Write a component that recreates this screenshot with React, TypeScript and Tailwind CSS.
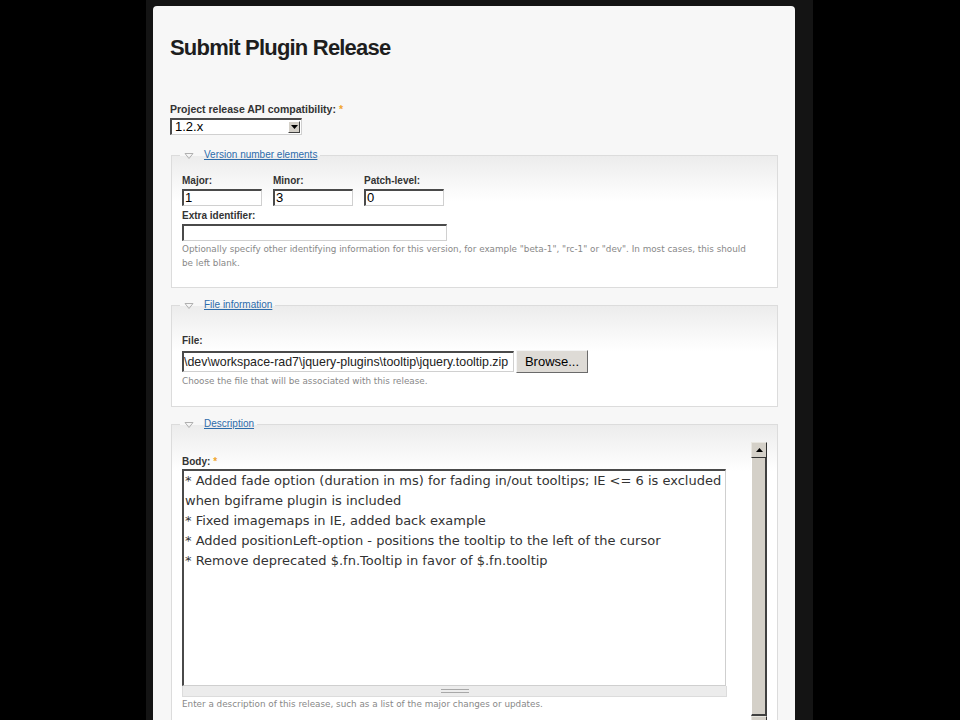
import { ReactNode } from "react";

// Label above a form field
const Label = ({
  text,
  required,
  big,
}: {
  text: string;
  required?: boolean;
  big?: boolean;
}) => {
  return (
    <div
      className={`${
        big ? "text-[10.5px]" : "text-[10px]"
      } leading-[14px] font-bold text-[#333]`}
    >
      {text}
      {required && <span className="ml-[3px] text-[#f0a52c]">*</span>}
    </div>
  );
};

const TextInput = ({ value, width }: { value: string; width: string }) => {
  return (
    <div
      className={`${width} mt-[1px] h-[17px] overflow-hidden whitespace-nowrap border-t-2 border-l-2 border-r border-b border-t-[#4a4a4a] border-l-[#4a4a4a] border-r-[#d0d0d0] border-b-[#d0d0d0] bg-white pl-[1px] text-[13px] leading-[14px] text-black`}
    >
      {value}
    </div>
  );
};

const Help = ({ children }: { children: ReactNode }) => {
  return (
    <p className="whitespace-nowrap font-['DejaVu_Sans',Verdana,sans-serif] text-[8.8px] leading-[14px] text-[#888]">
      {children}
    </p>
  );
};

const Fieldset = ({
  title,
  className,
  children,
}: {
  title: string;
  className: string;
  children: ReactNode;
}) => {
  return (
    <fieldset
      className={`ml-[1px] border border-[#dcdcdc] bg-[linear-gradient(to_bottom,#ececec,#ffffff_46px)] px-[10px] ${className}`}
    >
      <legend className="ml-[-2px] px-[3px]">
        <span className="flex items-center text-[10px] leading-[14px]">
          <svg width="10" height="7" viewBox="0 0 10 7" className="ml-[1px]">
            <path d="M1 1.5h8L5 6.5z" fill="none" stroke="#b0b0b0" />
          </svg>
          <a href="#" className="ml-[10px] text-[#2d6cab] underline">
            {title}
          </a>
        </span>
      </legend>
      {children}
    </fieldset>
  );
};

const Select = () => {
  return (
    <div className="mt-[2px] flex h-[17px] w-[132px] items-center border-t-2 border-l-2 border-r border-b border-t-[#4a4a4a] border-l-[#4a4a4a] border-r-[#d0d0d0] border-b-[#d0d0d0] bg-white">
      <span className="flex-1 pl-[3px] text-[13px] leading-[14px] text-black">
        1.2.x
      </span>
      <span className="mr-[1px] flex h-[12px] w-[12px] items-center justify-center border border-t-white border-l-white border-r-[#404040] border-b-[#404040] bg-[#d4d0c8]">
        <svg width="7" height="4" viewBox="0 0 7 4">
          <path d="M0 0h7L3.5 4z" fill="#000" />
        </svg>
      </span>
    </div>
  );
};

const Scrollbar = () => {
  return (
    <div className="flex w-[16px] flex-col">
      <div className="flex h-[16px] items-center justify-center border border-t-[#e8e6e0] border-l-[#e8e6e0] border-r-[#303030] border-b-[#303030] bg-[#d4d0c8]">
        <svg width="7" height="4" viewBox="0 0 7 4">
          <path d="M3.5 0L7 4H0z" fill="#000" />
        </svg>
      </div>
      <div className="h-[258px] border-l border-r-2 border-b-2 border-l-white border-r-[#404040] border-b-[#404040] bg-[#d4d0c8]" />
      <div className="h-[16px] border border-t-[#e8e6e0] border-l-[#e8e6e0] border-r-[#303030] bg-[#d4d0c8]" />
    </div>
  );
};

const bodyLines = [
  "* Added fade option (duration in ms) for fading in/out tooltips; IE <= 6 is excluded",
  "when bgiframe plugin is included",
  "* Fixed imagemaps in IE, added back example",
  "* Added positionLeft-option - positions the tooltip to the left of the cursor",
  "* Remove deprecated $.fn.Tooltip in favor of $.fn.tooltip",
];

export default function App() {
  return (
    <div className="h-[720px] overflow-hidden bg-black font-['Liberation_Sans',Arial,sans-serif]">
      <div className="ml-[146px] h-full w-[667px] bg-[#141414] pl-[7px] pr-[18px] pt-[6px]">
        <div className="h-full rounded-t-[4px] bg-[#f7f7f7] px-[17px] pt-[30px]">
          <h1 className="text-[22px] leading-[24px] font-bold tracking-[-0.8px] text-[#1e1e1e]">
            Submit Plugin Release
          </h1>

          <div className="mt-[42px]">
            <Label text="Project release API compatibility:" required big />
            <Select />
          </div>

          {/* Version */}
          <Fieldset title="Version number elements" className="mt-[13px]">
            <div className="mt-[12px] flex gap-[11px]">
              {[
                { label: "Major:", value: "1" },
                { label: "Minor:", value: "3" },
                { label: "Patch-level:", value: "0" },
              ].map((item) => (
                <div key={item.label}>
                  <Label text={item.label} />
                  <TextInput value={item.value} width="w-[80px]" />
                </div>
              ))}
            </div>
            <div className="mt-[3px]">
              <Label text="Extra identifier:" />
              <TextInput value="" width="w-[265px]" />
            </div>
            <div className="mt-[1px] pb-[17px]">
              <Help>
                Optionally specify other identifying information for this
                version, for example "beta-1", "rc-1" or "dev". In most cases,
                this should
                <br />
                be left blank.
              </Help>
            </div>
          </Fieldset>

          {/* File */}
          <Fieldset title="File information" className="mt-[10px]">
            <div className="mt-[22px]">
              <Label text="File:" />
              <div className="mt-[2px] flex items-center">
                <div className="h-[21px] w-[332px] overflow-hidden whitespace-nowrap border-t-2 border-l-2 border-r border-b border-t-[#4a4a4a] border-l-[#4a4a4a] border-r-[#d0d0d0] border-b-[#d0d0d0] bg-white text-[12.4px] leading-[18px] text-[#222]">
                  {"\\dev\\workspace-rad7\\jquery-plugins\\tooltip\\jquery.tooltip.zip"}
                </div>
                <button className="ml-[2px] h-[23px] w-[72px] border border-t-[#f4f4f4] border-l-[#f4f4f4] border-r-[#6a6a6a] border-b-[#6a6a6a] bg-[#dedbd6] text-[13px] leading-[18px] text-black">
                  Browse...
                </button>
              </div>
              <div className="mt-[1px] pb-[18px]">
                <Help>Choose the file that will be associated with this release.</Help>
              </div>
            </div>
          </Fieldset>

          {/* Description */}
          <Fieldset title="Description" className="mt-[10px]">
            <div className="mt-[11px] flex justify-between">
              <div className="w-[544px] pt-[13px]">
                <Label text="Body:" required />
                <div className="h-[217px] w-[544px] border-t-2 border-l-2 border-r border-b border-t-[#4a4a4a] border-l-[#4a4a4a] border-r-[#cfcfcf] border-b-[#cfcfcf] bg-white pl-[1px] font-['DejaVu_Sans',Verdana,sans-serif] text-[13px] leading-[20px] text-[#333]">
                  {bodyLines.map((line) => (
                    <div key={line} className="whitespace-nowrap">
                      {line}
                    </div>
                  ))}
                </div>
                <div className="flex h-[11px] w-[545px] items-center justify-center border border-t-0 border-[#dcdcdc] bg-[#ececec]">
                  <div className="h-[4px] w-[28px] border-y border-[#a8a8a8]" />
                </div>
                <Help>
                  Enter a description of this release, such as a list of the
                  major changes or updates.
                </Help>
              </div>
              <Scrollbar />
            </div>
          </Fieldset>
        </div>
      </div>
    </div>
  );
}
